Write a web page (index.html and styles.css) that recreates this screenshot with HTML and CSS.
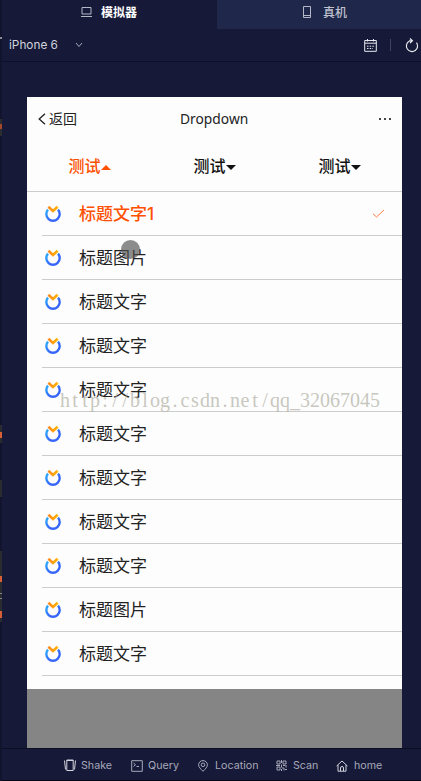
FILE: index.html
```html
<!DOCTYPE html>
<html lang="zh-CN">

<head>
    <meta charset="UTF-8">
    <meta name="viewport" content="width=device-width, initial-scale=1.0">
    <title>Dropdown</title>
    <link rel="stylesheet" href="styles.css">
</head>

<body>

    <svg class="defs" width="0" height="0">
        <linearGradient id="blue" x1="0" y1="0" x2="1" y2="1">
            <stop offset="0.1" stop-color="#2fa5fa" />
            <stop offset="0.6" stop-color="#3565fa" />
        </linearGradient>
        <linearGradient id="orange" x1="0" y1="0" x2="1" y2="0">
            <stop offset="0" stop-color="#ff8a1c" />
            <stop offset="1" stop-color="#ffb400" />
        </linearGradient>
        <symbol id="logo" viewBox="0 0 18 18">
            <path d="M4 4.6A6.7 6.7 0 1 0 14 4.6" fill="none" stroke="url(#blue)" stroke-width="2.4" />
            <path d="M4.4 1.8L9 6L13.6 1.8" fill="none" stroke="url(#orange)" stroke-width="2.6" />
        </symbol>
    </svg>

    <div class="editor-edge"></div>

    <div class="simulator">
        <div class="tabs">
            <div class="tab tab-active">
                <svg width="12" height="12" viewBox="0 0 12 12"><path d="M2 1.5h9v6.5H2zM1 10.5h11" /></svg>
                <span>模拟器</span>
            </div>
            <div class="tab tab-device">
                <svg width="12" height="12" viewBox="0 0 12 12"><path d="M1.5.5h7v11h-7zM1.5 9.5h7" /></svg>
                <span>真机</span>
            </div>
        </div>

        <div class="toolbar">
            <span class="device">iPhone 6</span>
            <svg class="arrow" width="8" height="6" viewBox="0 0 8 6"><path d="M1 1l3 3.5L7 1" /></svg>
            <svg class="calendar" width="13" height="13" viewBox="0 0 13 13">
                <path d="M.7 1.5h11.6v10.8H.7zM.7 4.2h11.6M3.5 0v2.5M9.5 0v2.5" />
                <path d="M3 7.2h7M3 9.5h6" stroke-dasharray="1.5 1.2" />
            </svg>
            <span class="divider"></span>
            <svg class="refresh" width="14" height="15" viewBox="0 0 14 15"><path d="M4 3.2A5.6 5.6 0 1 0 11.5 4.6M5 .5l2.4 2.3L5 5M7 2.8H4" /></svg>
        </div>

        <div class="stage">
            <div class="phone">
                <div class="navbar">
                    <div class="back">
                        <svg width="8" height="12" viewBox="0 0 8 12"><path d="M7 .8L1.2 6L7 11.2" /></svg>
                        <span>返回</span>
                    </div>
                    <div class="title">Dropdown</div>
                    <div class="more"><i></i><i></i><i></i></div>
                </div>

                <div class="filters">
                    <div class="filter selected">测试<i class="caret up"></i></div>
                    <div class="filter">测试<i class="caret"></i></div>
                    <div class="filter">测试<i class="caret"></i></div>
                </div>

                <div class="list">
                    <div class="item selected">
                        <svg class="logo"><use href="#logo" /></svg><span>标题文字1</span>
                        <svg class="check" width="13" height="10" viewBox="0 0 13 10"><path d="M1 4.8L4.5 8L12 1" /></svg>
                    </div>
                    <div class="item"><svg class="logo"><use href="#logo" /></svg><span>标题图片</span></div>
                    <div class="item"><svg class="logo"><use href="#logo" /></svg><span>标题文字</span></div>
                    <div class="item"><svg class="logo"><use href="#logo" /></svg><span>标题文字</span></div>
                    <div class="item"><svg class="logo"><use href="#logo" /></svg><span>标题文字</span></div>
                    <div class="item"><svg class="logo"><use href="#logo" /></svg><span>标题文字</span></div>
                    <div class="item"><svg class="logo"><use href="#logo" /></svg><span>标题文字</span></div>
                    <div class="item"><svg class="logo"><use href="#logo" /></svg><span>标题文字</span></div>
                    <div class="item"><svg class="logo"><use href="#logo" /></svg><span>标题文字</span></div>
                    <div class="item"><svg class="logo"><use href="#logo" /></svg><span>标题图片</span></div>
                    <div class="item"><svg class="logo"><use href="#logo" /></svg><span>标题文字</span></div>
                </div>

                <div class="touch"></div>
                <svg class="watermark" width="330" height="28">
                    <text y="18" x="8 18 28 38 48 58 68 78 88 98 108 118 128 138 148 158 168 178 188 198 208 218 228 238 248 258 268 278 288 298 308 318">http://blog.csdn.net/qq_32067045</text>
                </svg>
            </div>
        </div>

        <div class="footer">
            <div class="action shake">
                <svg width="12" height="13" viewBox="0 0 12 13"><path d="M2.8 1h6.4v10.5H2.8zM.5 1.5l1 9M11.5 1.5l-1 9M3 1.5h6" /></svg>
                <span>Shake</span>
            </div>
            <div class="action query">
                <svg width="12" height="12" viewBox="0 0 12 12"><path d="M.7.7h10.6v10.6H.7zM2.5 3l2 1.7l-2 1.7M5.5 6.5h2.5" /></svg>
                <span>Query</span>
            </div>
            <div class="action location">
                <svg width="10" height="12" viewBox="0 0 10 12"><path d="M5 11.3C2.5 8.8.6 7 .6 4.8a4.4 4.2 0 0 1 8.8 0C9.4 7 7.5 8.8 5 11.3z" /><circle cx="5" cy="4.8" r="1.8" /></svg>
                <span>Location</span>
            </div>
            <div class="action scan">
                <svg width="11" height="11" viewBox="0 0 11 11"><path d="M1 1h3v3H1zM7 1h3v3H7zM1 7h3v3H1zM5.5 0v3M0 5.5h4M5.5 4.5v3M7 5.5h2M10 5v2.5M6 8h2v2.5M9 9.5h2M5.5 9v2" /></svg>
                <span>Scan</span>
            </div>
            <div class="action home">
                <svg width="12" height="12" viewBox="0 0 12 12"><path d="M.6 6L6 1l5.4 5M2 5v6.2h8V5M4.5 11V8a1.5 1.5 0 0 1 3 0v3" /></svg>
                <span>home</span>
            </div>
        </div>
    </div>

</body>

</html>
```
FILE: styles.css
```css
* {
    box-sizing: border-box;
}

body {
    margin: 0;
    display: flex;
    width: 421px;
    height: 781px;
    overflow: hidden;
    background: #161937;
    font-family: Inter, "Noto Sans CJK SC", sans-serif;
}

svg {
    display: block;
    flex: none;
    fill: none;
    stroke: currentColor;
}

.defs {
    position: absolute;
}

/* sliver of the code editor left of the simulator */
.editor-edge {
    width: 2px;
    background: linear-gradient(#11142c 37px, #8a8b96 37px, #8a8b96 39px, #11142c 39px, #11142c 119px, #2b2c30 119px, #2b2c30 124px, #a5482b 124px, #a5482b 129px, #2b2c30 129px, #2b2c30 136px, #11142c 136px, #11142c 425px, #2b2c30 425px, #2b2c30 432px, #d65f35 432px, #d65f35 438px, #2b2c30 438px, #2b2c30 443px, #11142c 443px, #11142c 480px, #2b2c30 480px, #2b2c30 497px, #11142c 497px, #11142c 551px, #2b2c30 551px, #2b2c30 576px, #d65f35 576px, #d65f35 582px, #2b2c30 582px, #2b2c30 593px, #85858a 593px, #85858a 594px, #2b2c30 594px, #2b2c30 598px, #85858a 598px, #85858a 599px, #2b2c30 599px, #2b2c30 611px, #d65f35 611px, #d65f35 618px, #2b2c30 618px, #2b2c30 622px, #11142c 622px);
}

.simulator {
    flex: 1;
    display: flex;
    flex-direction: column;
    border-bottom: 1px solid #050714;
}

.tabs {
    display: flex;
    height: 29px;
    font-size: 12px;
}

.tab {
    display: flex;
    padding-bottom: 6px;
    align-items: center;
    gap: 9px;
    color: #bfc1ce;
    font-weight: 500;
}

.tab-active {
    width: 215px;
    padding-left: 78px;
    color: #fff;
    font-weight: 700;
}

.tab-active svg,
.tab-device svg {
    color: #b5b8c7;
}

.tab-device {
    flex: 1;
    padding-left: 85px;
    background: #1f284b;
}

.toolbar {
    display: flex;
    align-items: center;
    height: 33px;
    padding-left: 7px;
    border-bottom: 1px solid #0d1029;
    color: #e9eaf0;
}

.device {
    width: 66px;
    font-size: 11.8px;
    color: #d0d2dc;
}

.arrow {
    color: #a9abbb;
}

.calendar {
    margin-left: 281px;
}

.divider {
    width: 1px;
    height: 12px;
    margin: 0 14px 0 13px;
    background: #41445e;
}

.refresh {
    stroke-width: 1.2;
}

.stage {
    flex: 1;
    padding: 35px 0 0 25px;
}

.phone {
    position: relative;
    width: 375px;
    height: 651px;
    background: #858585;
    color: #222;
}

.navbar {
    display: flex;
    align-items: center;
    height: 44px;
    padding: 0 11px;
    background: #fdfdfd;
    font-size: 14px;
}

.back {
    display: flex;
    align-items: center;
    gap: 3px;
    width: 142px;
}

.back span {
    padding-bottom: 2px;
}

.back svg {
    stroke-width: 1.3;
}

.title {
    flex: 1;
    padding-bottom: 1px;
    font-family: "Noto Sans", sans-serif;
    font-size: 13.8px;
}

.more {
    display: flex;
    gap: 3px;
}

.more i {
    width: 2px;
    height: 2px;
    background: #444;
}

.filters {
    display: flex;
    height: 51px;
    padding-bottom: 2px;
    border-bottom: 1px solid #ccc;
    background: #fdfdfd;
    color: #111;
    font-size: 16px;
    font-weight: 500;
}

.filter {
    flex: 1;
    display: flex;
    align-items: center;
    justify-content: center;
}

.caret {
    border: 5px solid transparent;
    border-top-color: currentColor;
    border-bottom-width: 0;
    margin-top: 4px;
}

.caret.up {
    border-width: 0 5px 5px;
    border-color: transparent transparent currentColor;
}

.filter.selected,
.item.selected {
    color: #ff5000;
}

.list {
    height: 497px;
    padding-left: 15px;
    background: #fdfdfd;
}

.item {
    display: flex;
    align-items: center;
    height: 44px;
    padding: 0 17px 0 2px;
    border-bottom: 1px solid #ccc;
    font-size: 17px;
}

.item.selected {
    font-weight: 500;
}

.item span {
    flex: 1;
    padding-bottom: 2px;
}

.logo {
    width: 18px;
    height: 18px;
    margin: 1px 17px 0 0;
}

.check {
    color: #ff7b45;
}

.touch {
    position: absolute;
    left: 94px;
    top: 143px;
    width: 19px;
    height: 19px;
    border-radius: 50%;
    background: rgba(80, 80, 80, 0.65);
}

.watermark {
    position: absolute;
    left: 30px;
    top: 292px;
    font-family: "Liberation Serif", serif;
    font-size: 20px;
}

.watermark text {
    fill: #b9b9ae;
    fill-opacity: 0.8;
    stroke: none;
    text-anchor: middle;
}

.footer {
    display: flex;
    align-items: center;
    height: 32px;
    padding: 2px 0 0 62px;
    border-top: 1px solid #0b0d20;
    color: #a7a9ba;
    font-size: 10.7px;
}

.action {
    display: flex;
    align-items: center;
    gap: 5px;
}

.shake {
    width: 67px;
}

.query {
    width: 67px;
}

.location {
    width: 78px;
    gap: 7px;
}

.scan {
    width: 60px;
    gap: 6px;
}

.home {
    gap: 6px;
}

.shake svg,
.home svg {
    color: #d4d5de;
}
```
